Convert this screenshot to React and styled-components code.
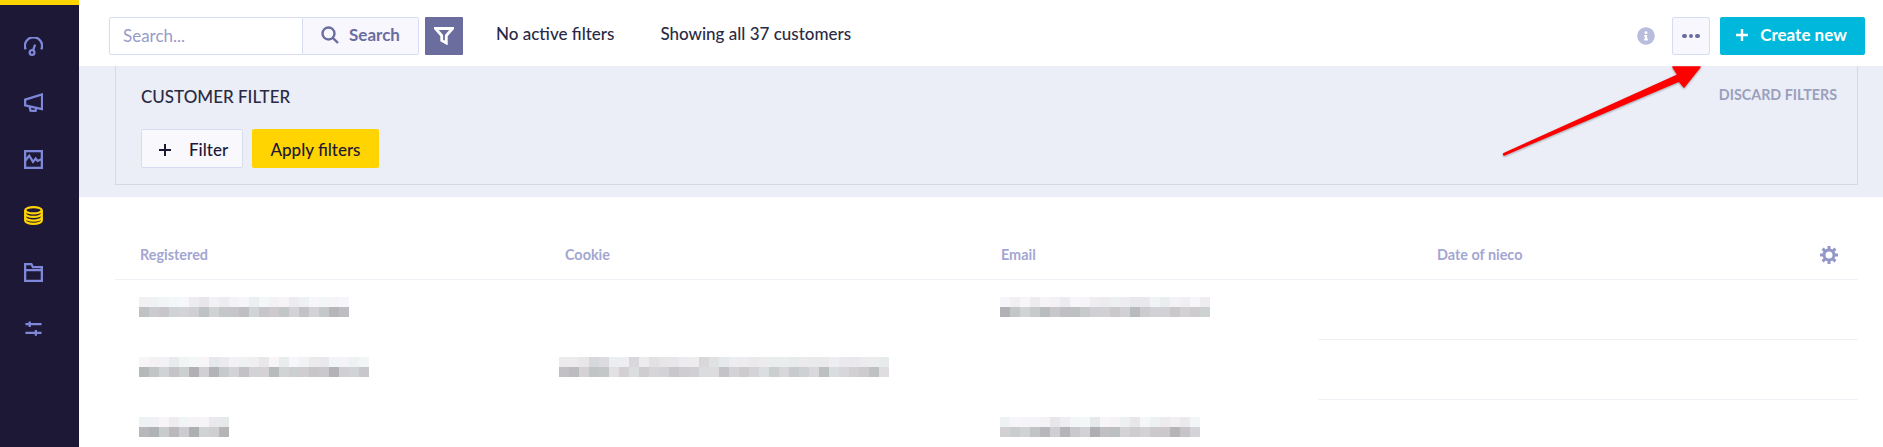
import React from 'react';
import styled, { createGlobalStyle } from 'styled-components';
import { FaInfoCircle } from 'react-icons/fa';

const GlobalStyle = createGlobalStyle`
    html, body {
        margin: 0;
        height: 100%;
        overflow: hidden;
        background: #fff;
        font-family: Lato, "Liberation Sans", sans-serif;
    }
`;

// the blurred values in the table, one list per censored cell
const blurred = [
    { col: 1, row: 0, cells: 21, seed: 3 },
    { col: 3, row: 0, cells: 21, seed: 11 },
    { col: 1, row: 1, cells: 23, seed: 7 },
    { col: 2, row: 1, cells: 33, seed: 19, soft: true },
    { col: 1, row: 2, cells: 9, seed: 23 },
    { col: 3, row: 2, cells: 20, seed: 29 },
];

const shade = (seed, i, base, spread) => {
    const n = Math.abs(Math.sin(seed * 12.9898 + i * 78.233) * 43758.5453) % 1;
    const v = Math.round(base - n * n * spread);
    const tint = Math.round(n * 100) % 3;
    return `rgb(${v - (tint === 1 ? 3 : 0)}, ${v - (tint === 2 ? 2 : 0)}, ${v + (tint === 0 ? 4 : 0)})`;
};

const PixelBar = ({ cells, seed, soft }) => (
    <Pixels>
        {[0, 1].map((line) => (
            <PixelLine key={line}>
                {Array.from({ length: cells }).map((_, i) => (
                    <Pixel
                        key={i}
                        style={{
                            background: line === 0
                                ? shade(seed, i, soft ? 238 : 247, soft ? 22 : 16)
                                : shade(seed + 5, i, soft ? 228 : 212, soft ? 46 : 40),
                        }}
                    />
                ))}
            </PixelLine>
        ))}
    </Pixels>
);

const navIcons = [
    <>
        <path d="M1.800 13A9 9 0 1 1 18.200 13" />
        <circle cx="8.500" cy="16.300" r="2.500" />
        <path d="M9.500 14l2.200-6" />
    </>,
    <>
        <path d="M19 1.500v15.500L1.200 13V7z" />
        <path d="M6 14.500l.8 4 5.400.5.600-3.200" />
    </>,
    <>
        <rect x="1.200" y="1.200" width="17.600" height="17.600" />
        <path d="M1.500 11l4-5 4 6.500 2.800-3.500 2 2.500 4.500-2" />
    </>,
    <>
        <ellipse cx="10" cy="4.500" rx="8.700" ry="3.300" />
        <path d="M1.300 4.500v11c0 1.800 3.900 3.300 8.700 3.300s8.700-1.500 8.700-3.300v-11" />
        <path d="M1.300 8.200c0 1.800 3.900 3.300 8.700 3.300s8.700-1.500 8.700-3.300" />
        <path d="M1.300 12c0 1.800 3.900 3.300 8.700 3.300s8.700-1.500 8.700-3.300" />
    </>,
    <>
        <path d="M1.200 18.800V1.200h6.600l1.600 3.200h9.400v14.400z" />
        <path d="M1.200 7.500h17.600" />
    </>,
    <>
        <path d="M1.500 5.500h17M1.500 14.500h17" />
        <path d="M6 2.500v6M12.500 11.500v6" />
    </>,
];

const App = () => (
    <Page>
        <GlobalStyle />
        <Sidebar>
            {navIcons.map((icon, i) => (
                <NavIcon key={i} $active={i === 3} viewBox="0 0 20 20">
                    {icon}
                </NavIcon>
            ))}
        </Sidebar>
        <Main>
            <TopBar>
                <SearchInput placeholder="Search..." />
                <SearchButton>
                    <svg width="18" height="18" viewBox="0 0 18 18" fill="none" stroke="#6a6d9e" strokeWidth="2.400">
                        <circle cx="7.500" cy="7.500" r="6" />
                        <path d="M11.800 11.800L17 17" />
                    </svg>
                    Search
                </SearchButton>
                <FunnelButton>
                    <svg width="20" height="18" viewBox="0 0 20 18" fill="none" stroke="#fff" strokeWidth="2.800">
                        <path d="M1.500 1.500h17l-6.200 7v7.500l-4.600-2.500v-5z" />
                    </svg>
                </FunnelButton>
                <Status>No active filters</Status>
                <Status $wide>Showing all 37 customers</Status>
                <Actions>
                    <InfoIcon />
                    <DotsButton>
                        <Dot /><Dot /><Dot />
                    </DotsButton>
                    <CreateButton>
                        <svg width="14" height="14" viewBox="0 0 14 14" stroke="#fff" strokeWidth="2.400">
                            <path d="M7 1v12M1 7h12" />
                        </svg>
                        Create new
                    </CreateButton>
                </Actions>
            </TopBar>
            <FilterPanel>
                <FilterBox>
                    <FilterHead>
                        <FilterTitle>CUSTOMER FILTER</FilterTitle>
                        <Discard>DISCARD FILTERS</Discard>
                    </FilterHead>
                    <FilterActions>
                        <AddFilter>
                            <svg width="12" height="12" viewBox="0 0 12 12" stroke="#1c1836" strokeWidth="2">
                                <path d="M6 0v12M0 6h12" />
                            </svg>
                            Filter
                        </AddFilter>
                        <ApplyButton>Apply filters</ApplyButton>
                    </FilterActions>
                </FilterBox>
            </FilterPanel>
            <Table>
                <HeadRow>
                    <HeadCell>Registered</HeadCell>
                    <HeadCell>Cookie</HeadCell>
                    <HeadCell>Email</HeadCell>
                    <HeadCell>Date of nieco</HeadCell>
                    <Gear viewBox="0 0 20 20">
                        <circle cx="10" cy="10" r="5" />
                        <path d="M10 1v3.500M10 15.500V19M1 10h3.500M15.500 10H19M3.600 3.600l2.500 2.500M13.900 13.900l2.500 2.500M3.600 16.400l2.500-2.500M13.900 6.100l2.500-2.500" />
                    </Gear>
                </HeadRow>
                {[0, 1, 2].map((row) => (
                    <Row key={row} $last={row === 2}>
                        {[0, 1, 2, 3].map((col) => {
                            const item = blurred.find((b) => b.row === row && b.col === col + 1);
                            return (
                                <Cell key={col}>
                                    {item && <PixelBar cells={item.cells} seed={item.seed} soft={item.soft} />}
                                </Cell>
                            );
                        })}
                    </Row>
                ))}
            </Table>
        </Main>
        <Arrow viewBox="0 0 210 100">
            <path d="M0 90L175 11L170 3L197 3L181 23L176 17L1 91z" fill="#f00" stroke="#f00" strokeWidth="1.500" strokeLinejoin="round" />
        </Arrow>
    </Page>
);

export default App;

const Page = styled.div`
    display: flex;
    height: 100vh;
    overflow: hidden;
    position: relative;
`;

const Sidebar = styled.nav`
    width: 79px;
    flex: none;
    box-sizing: border-box;
    background: #1c1836;
    border-top: 5px solid #ffd400;
    padding: 32px 0 0 24px;
    display: flex;
    flex-direction: column;
    gap: 37.400px;
`;

const NavIcon = styled.svg`
    width: 19px;
    height: 19px;
    flex: none;
    fill: none;
    stroke: ${(props) => (props.$active ? '#ffd400' : '#7f88d8')};
    stroke-width: 2.400;
`;

const Main = styled.main`
    flex: 1;
    min-width: 0;
    display: flex;
    flex-direction: column;
    color: #2a2a44;
`;

const TopBar = styled.header`
    height: 66px;
    flex: none;
    box-sizing: border-box;
    padding: 17px 18px 11px 30px;
    display: flex;
    align-items: stretch;
`;

const SearchInput = styled.input`
    width: 194px;
    box-sizing: border-box;
    border: 1px solid #d8dcf0;
    border-radius: 2px 0 0 2px;
    padding: 0 13px 2px;
    font: 17px Lato, sans-serif;
    outline: none;
    &::placeholder {
        color: #989cc8;
        opacity: 1;
    }
`;

const SearchButton = styled.button`
    width: 116px;
    margin-right: 6px;
    border: 1px solid #d8dcf0;
    border-left: none;
    border-radius: 0 2px 2px 0;
    background: #f7f7fd;
    color: #6a6d9e;
    font: 700 17px Lato, sans-serif;
    display: flex;
    align-items: center;
    justify-content: center;
    gap: 10px;
    padding: 0 0 3px;
`;

const FunnelButton = styled.button`
    width: 38px;
    border: none;
    border-radius: 1px;
    background: #6a6d9e;
    display: flex;
    align-items: center;
    justify-content: center;
    padding: 0;
`;

const Status = styled.span`
    margin-left: ${(props) => (props.$wide ? '46px' : '33px')};
    font-size: 17px;
    font-weight: 500;
    line-height: 34px;
    color: #2a2a44;
`;

const Actions = styled.div`
    margin-left: auto;
    display: flex;
    align-items: center;
`;

const InfoIcon = styled(FaInfoCircle)`
    width: 18px;
    height: 18px;
    color: #b9bcdc;
    margin-right: 17px;
`;

const DotsButton = styled.button`
    width: 38px;
    height: 38px;
    box-sizing: border-box;
    border: 1px solid #d8dcf0;
    border-radius: 2px;
    background: #f7f7fd;
    margin-right: 10px;
    display: flex;
    align-items: center;
    justify-content: center;
    gap: 2px;
    padding: 0;
`;

const Dot = styled.i`
    width: 4.500px;
    height: 4.500px;
    border-radius: 50%;
    background: #6a6d9e;
`;

const CreateButton = styled.button`
    width: 145px;
    height: 38px;
    border: none;
    border-radius: 2px;
    background: #00b8dc;
    color: #fff;
    font: 700 17px Lato, sans-serif;
    display: flex;
    align-items: center;
    justify-content: center;
    gap: 11px;
    padding: 0 3px 3px 0;
`;

const FilterPanel = styled.section`
    height: 131px;
    flex: none;
    box-sizing: border-box;
    background: #ebeef7;
    padding: 0 25px 12px 36px;
    display: flex;
`;

const FilterBox = styled.div`
    flex: 1;
    box-sizing: border-box;
    border: 1px solid #d5d9e6;
    border-top: none;
    padding: 18px 20px 0 25px;
`;

const FilterHead = styled.div`
    display: flex;
    justify-content: space-between;
    align-items: center;
    height: 24px;
`;

const FilterTitle = styled.h2`
    margin: 0;
    font-size: 17px;
    font-weight: 500;
    color: #2a2a44;
`;

const Discard = styled.a`
    font-size: 14.300px;
    font-weight: 700;
    color: #9a9fbd;
    margin-top: -3px;
`;

const FilterActions = styled.div`
    display: flex;
    gap: 9px;
    margin-top: 21px;
`;

const AddFilter = styled.button`
    width: 102px;
    height: 39px;
    flex: none;
    box-sizing: border-box;
    border: 1px solid #d8dcf0;
    border-radius: 2px;
    background: #f9f9fd;
    color: #1c1836;
    font: 500 17px Lato, sans-serif;
    display: flex;
    align-items: center;
    gap: 18px;
    padding: 2px 0 0 17px;
`;

const ApplyButton = styled.button`
    width: 127px;
    height: 39px;
    flex: none;
    border: none;
    border-radius: 2px;
    background: #ffd400;
    color: #1c1836;
    font: 500 17px Lato, sans-serif;
    padding: 2px 0 0;
`;

const Table = styled.div`
    flex: none;
    margin: 0 25px 0 36px;
    padding-top: 33px;
`;

const columns = `
    display: grid;
    grid-template-columns: 425px 436px 436px 1fr;
    padding-left: 25px;
`;

const HeadRow = styled.div`
    ${columns}
    height: 50px;
    box-sizing: border-box;
    border-bottom: 1px solid #f0f1f6;
    align-items: center;
    position: relative;
    padding-bottom: 1px;
`;

const HeadCell = styled.div`
    font-size: 14.400px;
    font-weight: 700;
    color: #a3a6d2;
`;

const Gear = styled.svg`
    position: absolute;
    right: 19px;
    top: 15px;
    width: 20px;
    height: 20px;
    fill: none;
    stroke: #9396c8;
    stroke-width: 3;
`;

const Row = styled.div`
    ${columns}
    height: 60px;
    box-sizing: border-box;
    padding-top: 17px;
    background: ${(props) => (props.$last
        ? 'none'
        : 'linear-gradient(#f0f1f6, #f0f1f6) right bottom / 540px 1px no-repeat')};
`;

const Cell = styled.div`
    min-width: 0;
    margin-left: -1px;
    &:nth-child(2) {
        margin-left: -6px;
    }
`;

const Pixels = styled.div`
    display: flex;
    flex-direction: column;
`;

const PixelLine = styled.div`
    display: flex;
`;

const Pixel = styled.span`
    width: 10px;
    height: 10px;
    flex: none;
`;

const Arrow = styled.svg`
    position: absolute;
    left: 1503px;
    top: 64px;
    width: 210px;
    height: 100px;
    filter: drop-shadow(0 1px 1px rgba(0, 0, 0, 0.35));
`;
